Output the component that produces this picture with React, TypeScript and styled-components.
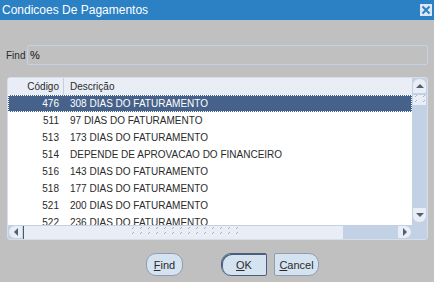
import React from "react";
import styled, { createGlobalStyle } from "styled-components";

const GlobalStyle = createGlobalStyle`
  html, body {
    margin: 0;
    padding: 0;
    background: #c0c0c0;
  }
  body {
    font-family: "Liberation Sans", Arial, sans-serif;
    font-size: 10px;
    color: #2a2a2a;
  }
`;

const Window = styled.div`
  display: flex;
  flex-direction: column;
  width: 434px;
  height: 282px;
  background: #c0c0c0;
  overflow: hidden;
`;

const TitleBar = styled.div`
  display: flex;
  align-items: center;
  justify-content: space-between;
  height: 20px;
  padding: 0 2px 0 2px;
  background: #2c80c4;
  color: #ffffff;
  font-size: 12px;
  box-sizing: border-box;
`;

const CloseBox = styled.div`
  display: flex;
  align-items: center;
  justify-content: center;
  width: 12px;
  height: 12px;
  margin-top: -1px;
  background: #dbe7f3;
`;

const FindRow = styled.div`
  display: flex;
  align-items: center;
  margin-top: 25px;
  padding: 0 6px 0 6px;
`;

const FindLabel = styled.span`
  width: 21px;
  color: #2a2a2a;
`;

const FindInput = styled.div`
  flex: 1;
  height: 20px;
  box-sizing: border-box;
  border: 1px solid #c4d3e4;
  border-radius: 2px;
  padding-left: 2px;
  display: flex;
  align-items: center;
  font-size: 11px;
  color: #111;
  background: #c0c0c0;
`;

const Panel = styled.div`
  display: grid;
  grid-template-columns: 1fr 15px;
  grid-template-rows: 1fr 14px;
  height: 163px;
  margin: 12px 6px 0 7px;
  box-sizing: border-box;
  border: 1px solid #d5dee9;
  border-radius: 3px;
  background: #c2d1e4;
  overflow: hidden;
`;

const TableArea = styled.div`
  display: flex;
  flex-direction: column;
  background: #ffffff;
  overflow: hidden;
`;

const Row = styled.div<{ $header?: boolean; $selected?: boolean }>`
  display: flex;
  flex-shrink: 0;
  height: 17px;
  align-items: center;
  box-sizing: border-box;
  background: ${(p) => (p.$header ? "#e9eef6" : p.$selected ? "#47628a" : "#ffffff")};
  color: ${(p) => (p.$selected ? "#ffffff" : "#2a2a2a")};
  outline: ${(p) => (p.$selected ? "1px dotted #ffffff" : "none")};
  outline-offset: -1px;
`;

const CodeCell = styled.div<{ $header?: boolean }>`
  width: 51px;
  height: 100%;
  display: flex;
  align-items: center;
  justify-content: flex-end;
  padding-right: 4px;
  box-sizing: content-box;
  border-right: ${(p) => (p.$header ? "1px solid #c6d0dd" : "1px solid transparent")};
`;

const DescCell = styled.div`
  flex: 1;
  padding-left: 6px;
  white-space: nowrap;
`;

const VScroll = styled.div`
  display: flex;
  flex-direction: column;
  grid-row: 1 / span 2;
  grid-column: 2;
  background: #c2d1e4;
  padding: 1px 1px 0 1px;
`;

const ArrowButton = styled.div<{ $dir: "up" | "down" | "left" | "right" }>`
  display: flex;
  align-items: center;
  justify-content: center;
  flex-shrink: 0;
  width: 13px;
  height: ${(p) => (p.$dir === "up" || p.$dir === "down" ? "14px" : "12px")};
  background: #e9eef6;
  border-radius: ${(p) =>
    p.$dir === "up"
      ? "6px 6px 1px 1px"
      : p.$dir === "down"
      ? "1px 1px 6px 6px"
      : p.$dir === "left"
      ? "6px 1px 1px 6px"
      : "1px 6px 6px 1px"};
`;

const VThumb = styled.div`
  height: 10px;
  margin-top: 1px;
  background: #e9eef6;
  border-top: 1px solid #c2d1e4;
`;

const VTrack = styled.div`
  flex: 1;
`;

const DownSlot = styled.div`
  height: 17px;
`;

const HScroll = styled.div`
  display: flex;
  align-items: center;
  grid-row: 2;
  grid-column: 1;
  background: #c2d1e4;
  padding: 0 1px 0 1px;
  gap: 1px;
`;

const HThumb = styled.div`
  display: flex;
  align-items: center;
  justify-content: flex-end;
  width: 320px;
  height: 13px;
  background: #e9eef6;
  border-left: 1px solid #4d586b;
  padding-right: 105px;
  box-sizing: border-box;
`;

const HTrack = styled.div`
  flex: 1;
`;

const ButtonRow = styled.div`
  display: flex;
  align-items: center;
  margin-top: 13px;
  padding-left: 146px;
`;

const DialogButton = styled.button<{ $w: number; $shape: "pill" | "left" | "right"; $default?: boolean }>`
  width: ${(p) => p.$w}px;
  height: 23px;
  margin-right: ${(p) => (p.$shape === "pill" ? "38px" : p.$shape === "left" ? "7px" : "0")};
  padding: 0;
  font-family: "Liberation Sans", Arial, sans-serif;
  font-size: 11px;
  color: #2a2a2a;
  background: #d5e3f1;
  border: ${(p) => (p.$default ? "1px solid #4a5f7e" : "1px solid #8f9db0")};
  box-shadow: ${(p) => (p.$default ? "inset 1px 1px 0 #4a5f7e" : "none")};
  border-radius: ${(p) =>
    p.$shape === "pill" ? "10px" : p.$shape === "left" ? "10px 2px 2px 10px" : "2px 10px 10px 2px"};
  u {
    text-decoration: underline;
  }
`;

const rows = [
  ["476", "308 DIAS DO FATURAMENTO"],
  ["511", "97 DIAS DO FATURAMENTO"],
  ["513", "173 DIAS DO FATURAMENTO"],
  ["514", "DEPENDE DE APROVACAO DO FINANCEIRO"],
  ["516", "143 DIAS DO FATURAMENTO"],
  ["518", "177 DIAS DO FATURAMENTO"],
  ["521", "200 DIAS DO FATURAMENTO"],
  ["522", "236 DIAS DO FATURAMENTO"],
];

const Arrow = ({ dir }: { dir: "up" | "down" | "left" | "right" }) => {
  const pts = {
    up: "1,6 9,6 5,2",
    down: "1,2 9,2 5,6",
    left: "6,1 6,9 2,5",
    right: "2,1 2,9 6,5",
  }[dir];
  const vertical = dir === "up" || dir === "down";
  return (
    <svg width={vertical ? 10 : 8} height={vertical ? 8 : 10}>
      <polygon points={pts} fill="#555f72" />
    </svg>
  );
};

const Grip = ({ w, h }: { w: number; h: number }) => (
  <svg width={w} height={h}>
    <defs>
      <pattern id={`g${w}`} width="8" height="5" patternUnits="userSpaceOnUse">
        <rect x="3" y="0" width="1" height="1" fill="#a9b4c2" />
        <rect x="2" y="1" width="1" height="1" fill="#a9b4c2" />
      </pattern>
    </defs>
    <rect width={w} height={h} fill={`url(#g${w})`} />
  </svg>
);

export default function App() {
  return (
    <>
      <GlobalStyle />
      <Window>
        <TitleBar>
          <span>Condicoes De Pagamentos</span>
          <CloseBox>
            <svg width="10" height="10">
              <path d="M1.5 1.5 L8.5 8.5 M8.5 1.5 L1.5 8.5" stroke="#2c80c4" strokeWidth="2" />
            </svg>
          </CloseBox>
        </TitleBar>
        <FindRow>
          <FindLabel>Find</FindLabel>
          <FindInput>%</FindInput>
        </FindRow>
        <Panel>
          <TableArea>
            <Row $header>
              <CodeCell $header>Código</CodeCell>
              <DescCell>Descrição</DescCell>
            </Row>
            {rows.map(([code, desc], i) => (
              <Row key={code} $selected={i === 0}>
                <CodeCell>{code}</CodeCell>
                <DescCell>{desc}</DescCell>
              </Row>
            ))}
          </TableArea>
          <VScroll>
            <ArrowButton $dir="up">
              <Arrow dir="up" />
            </ArrowButton>
            <VThumb>
              <Grip w={13} h={10} />
            </VThumb>
            <VTrack />
            <ArrowButton $dir="down">
              <Arrow dir="down" />
            </ArrowButton>
            <DownSlot />
          </VScroll>
          <HScroll>
            <ArrowButton $dir="left">
              <Arrow dir="left" />
            </ArrowButton>
            <HThumb>
              <Grip w={108} h={10} />
            </HThumb>
            <HTrack />
            <ArrowButton $dir="right">
              <Arrow dir="right" />
            </ArrowButton>
          </HScroll>
        </Panel>
        <ButtonRow>
          <DialogButton $w={37} $shape="pill">
            <u>F</u>ind
          </DialogButton>
          <DialogButton $w={46} $shape="left" $default>
            <u>O</u>K
          </DialogButton>
          <DialogButton $w={45} $shape="right">
            <u>C</u>ancel
          </DialogButton>
        </ButtonRow>
      </Window>
    </>
  );
}
